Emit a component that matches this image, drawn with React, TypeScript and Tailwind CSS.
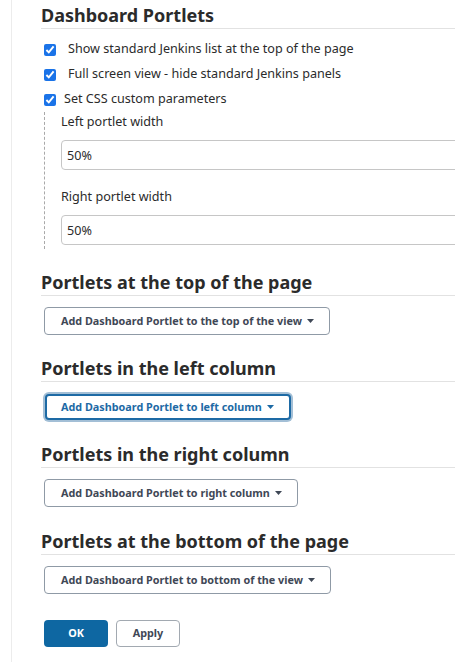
import React from 'react'

const font = { fontFamily: '"Noto Sans", "Open Sans", sans-serif' }

function Heading({ children, className = '' }: { children: React.ReactNode; className?: string }) {
  return (
    <h2
      className={`border-b border-[#e2e2e2] text-[18px] font-bold leading-[26px] text-[#2b2b2b] whitespace-nowrap ${className}`}
    >
      {children}
    </h2>
  )
}

function Caret() {
  return (
    <svg className="ml-[5px] h-[4px] w-[7px]" viewBox="0 0 7 4">
      <path d="M0 0h7L3.5 4z" fill="currentColor" />
    </svg>
  )
}

function AddButton({ label, focused = false }: { label: string; focused?: boolean }) {
  return (
    <div className="mt-[11px] flex">
      <button
        type="button"
        className={
          focused
            ? 'ml-[4px] mt-[1px] flex h-[26px] items-center rounded-[4px] border-2 border-[#1d6aa5] bg-white pl-[14px] pr-[15px] text-[10.8px] font-bold text-[#1d6aa5] shadow-[0_0_0_2px_#a3bfd6]'
            : 'ml-[3px] flex h-[28px] items-center rounded-[4px] border border-[#8f9aa6] bg-white pl-[16px] pr-[15px] text-[10.8px] font-bold text-[#3f4856]'
        }
      >
        {label}
        <Caret />
      </button>
    </div>
  )
}

function CheckRow({ label, indent }: { label: string; indent: boolean }) {
  return (
    <label className="flex h-[25px] items-center text-[12.6px] text-[#2b2b2b]">
      <input type="checkbox" defaultChecked className="ml-[3px] h-[12px] w-[12px] accent-[#1a73e8]" />
      <span className={indent ? 'ml-[12px]' : 'ml-[8px]'}>{label}</span>
    </label>
  )
}

function Field({ label, value, className = '' }: { label: string; value: string; className?: string }) {
  return (
    <div className={className}>
      <div className="text-[12.6px] leading-[20px] text-[#2b2b2b]">{label}</div>
      <input
        readOnly
        value={value}
        className="mt-[8px] h-[30px] w-[420px] rounded-[4px] border border-[#c6c6c6] bg-white px-[5px] text-[12.6px] text-[#2b2b2b] outline-none"
      />
    </div>
  )
}

export default function App() {
  return (
    <div className="flex h-[662px] w-[455px] overflow-hidden bg-white" style={font}>
      <div className="w-[11px] shrink-0" />
      <div className="w-[30px] shrink-0 border-l border-[#ececec]" />
      <div className="min-w-0 flex-1">
        <Heading className="mt-[2px]">Dashboard Portlets</Heading>

        <div className="mt-[8px]">
          <CheckRow label="Show standard Jenkins list at the top of the page" indent />
          <CheckRow label="Full screen view - hide standard Jenkins panels" indent />
          <CheckRow label="Set CSS custom parameters" indent={false} />
        </div>

        <div className="ml-[3px] border-l border-dashed border-[#a9a9a9] pb-[4px] pl-[16px]">
          <Field label="Left portlet width" value="50%" />
          <Field label="Right portlet width" value="50%" className="mt-[17px]" />
        </div>

        <Heading className="mt-[20px]">Portlets at the top of the page</Heading>
        <AddButton label="Add Dashboard Portlet to the top of the view" />

        <Heading className="mt-[20px]">Portlets in the left column</Heading>
        <AddButton label="Add Dashboard Portlet to left column" focused />

        <Heading className="mt-[21px]">Portlets in the right column</Heading>
        <AddButton label="Add Dashboard Portlet to right column" />

        <Heading className="mt-[21px]">Portlets at the bottom of the page</Heading>
        <AddButton label="Add Dashboard Portlet to bottom of the view" />

        <div className="ml-[3px] mt-[26px] flex gap-[8px]">
          <button
            type="button"
            className="h-[27px] w-[64px] rounded-[4px] bg-[#0e67a2] text-[10.8px] font-bold text-white"
          >
            OK
          </button>
          <button
            type="button"
            className="h-[27px] w-[64px] rounded-[4px] border border-[#a2a9b1] bg-white text-[10.8px] font-bold text-[#3f4856]"
          >
            Apply
          </button>
        </div>
      </div>
    </div>
  )
}
